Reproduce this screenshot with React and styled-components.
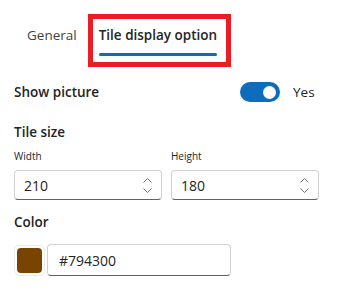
import React from "react";
import styled, { createGlobalStyle } from "styled-components";

const Global = createGlobalStyle`
  body {
    margin: 0;
    background: #ffffff;
    font-family: "Segoe UI", "Open Sans", "Noto Sans", sans-serif;
    color: #242424;
  }
`;

const Page = styled.div`
  width: 338px;
  height: 302px;
  padding: 14px 19px 0 14px;
  box-sizing: border-box;
`;

const TabList = styled.div`
  display: flex;
  align-items: flex-start;
  margin-left: 3px;
`;

const Tab = styled.div`
  padding: 11px 11px 0 10px;
  font-size: 13.5px;
  line-height: 20px;
  color: #424242;
`;

const SelectedTab = styled.div`
  border: 5px solid #ed1c24;
  padding: 6px 9px 6px 6px;
  display: flex;
  flex-direction: column;
`;

const TabLabel = styled.span`
  font-size: 13.5px;
  line-height: 20px;
  font-weight: 600;
  color: #242424;
`;

const Underline = styled.div`
  height: 3px;
  margin-top: 8px;
  border-radius: 2px;
  background: #0f6cbd;
`;

const Section = styled.div`
  display: flex;
  flex-direction: column;
`;

const Row = styled.div`
  display: flex;
  align-items: center;
  margin-top: ${(p) => p.$top || 0}px;
`;

const Heading = styled.div`
  font-size: 13.5px;
  line-height: 20px;
  font-weight: 600;
  width: ${(p) => (p.$width ? p.$width + "px" : "auto")};
  margin-top: ${(p) => p.$top || 0}px;
`;

const Switch = styled.div`
  width: 40px;
  height: 20px;
  border-radius: 10px;
  background: #0f6cbd;
  display: flex;
  align-items: center;
  justify-content: flex-end;
  padding: 0 4px;
  box-sizing: border-box;
`;

const Thumb = styled.div`
  width: 13px;
  height: 13px;
  border-radius: 50%;
  background: #ffffff;
`;

const SwitchLabel = styled.span`
  font-size: 13.5px;
  line-height: 20px;
  margin-left: 13px;
`;

const Fields = styled.div`
  display: grid;
  grid-template-columns: 148px 148px;
  column-gap: 9px;
  margin-top: 8px;
`;

const Field = styled.div`
  display: flex;
  flex-direction: column;
`;

const Caption = styled.span`
  font-size: 10px;
  line-height: 13px;
  color: #242424;
  margin-bottom: 7px;
`;

const InputBox = styled.div`
  height: ${(p) => p.$height || 30}px;
  width: ${(p) => (p.$width ? p.$width + "px" : "auto")};
  box-sizing: border-box;
  border: 1px solid #d1d1d1;
  border-bottom-color: #616161;
  border-radius: 4px;
  display: flex;
  align-items: center;
  padding: 0 0 0 ${(p) => p.$pad || 9}px;
  font-size: 14px;
  color: #242424;
`;

const Value = styled.span`
  flex: 1;
`;

const Spinner = styled.div`
  width: 22px;
  display: flex;
  flex-direction: column;
  align-items: center;
  gap: 5px;
  margin-right: 3px;
`;

const ColorRow = styled.div`
  display: flex;
  align-items: center;
  gap: 2px;
  margin-top: 12px;
`;

const SwatchFrame = styled.div`
  width: 31px;
  height: 31px;
  box-sizing: border-box;
  border: 1px solid #ebebeb;
  border-radius: 5px;
  padding: 2px;
  display: flex;
`;

const Swatch = styled.div`
  flex: 1;
  border-radius: 4px;
  background: ${(p) => p.$color};
`;

const Chevron = ({ up }) => (
  <svg width="9" height="5" viewBox="0 0 9 5" fill="none">
    <path
      d={up ? "M0.5 4.5 L4.5 0.5 L8.5 4.5" : "M0.5 0.5 L4.5 4.5 L8.5 0.5"}
      stroke="#707070"
      strokeWidth="1"
    />
  </svg>
);

const NumberInput = ({ value }) => (
  <InputBox>
    <Value>{value}</Value>
    <Spinner>
      <Chevron up />
      <Chevron />
    </Spinner>
  </InputBox>
);

const App = () => {
  return (
    <>
      <Global />
      <Page>
        <TabList>
          <Tab>General</Tab>
          <SelectedTab>
            <TabLabel>Tile display option</TabLabel>
            <Underline />
          </SelectedTab>
        </TabList>
        <Section>
          <Row $top={15}>
            <Heading $width={226}>Show picture</Heading>
            <Switch>
              <Thumb />
            </Switch>
            <SwitchLabel>Yes</SwitchLabel>
          </Row>
          <Heading $top={20}>Tile size</Heading>
          <Fields>
            <Field>
              <Caption>Width</Caption>
              <NumberInput value="210" />
            </Field>
            <Field>
              <Caption>Height</Caption>
              <NumberInput value="180" />
            </Field>
          </Fields>
          <Heading $top={12}>Color</Heading>
          <ColorRow>
            <SwatchFrame>
              <Swatch $color="#794300" />
            </SwatchFrame>
            <InputBox $width={184} $height={32} $pad={11}>
              <Value>#794300</Value>
            </InputBox>
          </ColorRow>
        </Section>
      </Page>
    </>
  );
};

export default App;
